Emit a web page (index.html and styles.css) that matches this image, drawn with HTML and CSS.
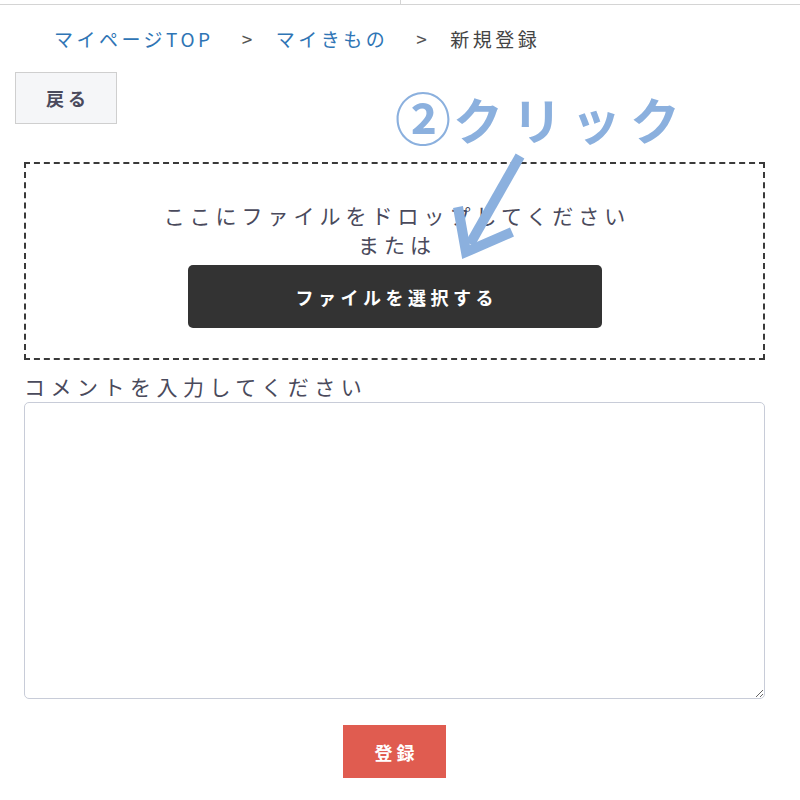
FILE: index.html
```html
<!DOCTYPE html>
<html lang="ja">
<head>
    <meta charset="UTF-8">
    <meta name="viewport" content="width=device-width, initial-scale=1.0">
    <title>新規登録</title>
    <link rel="stylesheet" href="styles.css">
</head>
<body>
    <div class="topbar">
        <div class="topbar-left"></div>
        <div class="topbar-right"></div>
    </div>

    <nav class="breadcrumb">
        <a href="#" class="crumb-link">マイページTOP</a>
        <span class="crumb-sep">&gt;</span>
        <a href="#" class="crumb-link">マイきもの</a>
        <span class="crumb-sep">&gt;</span>
        <span class="crumb-current">新規登録</span>
    </nav>

    <div class="back-row">
        <a href="#" class="back-button">戻る</a>
    </div>

    <form class="upload-form">
        <div class="dropzone">
            <p class="drop-text">ここにファイルをドロップしてください</p>
            <p class="drop-or">または</p>
            <button type="button" class="select-button">ファイルを選択する</button>
        </div>

        <label class="comment-label" for="comment">コメントを入力してください</label>
        <textarea id="comment" class="comment-box"></textarea>

        <div class="submit-row">
            <button type="submit" class="submit-button">登録</button>
        </div>
    </form>

    <!-- 説明用の注釈 -->
    <div class="note">
        <span class="note-text"><span class="note-num">②</span>クリック</span>
        <svg class="note-arrow" width="90" height="110" viewBox="0 0 90 110">
            <path d="M70 4 L20 92" stroke="#8bb0de" stroke-width="10" fill="none"/>
            <path d="M8 55 L16 100 L62 80" stroke="#8bb0de" stroke-width="10" fill="none"/>
        </svg>
    </div>
</body>
</html>
```

FILE: styles.css
```css
body {
    margin: 0;
    font-family: "Noto Sans CJK JP", "Noto Sans", sans-serif;
    color: #4a4a5c;
    background: #fff;
}
.topbar {
    display: flex;
    height: 4px;
    border-bottom: 1px solid #d4d4d4;
}
.topbar-left {
    width: 400px;
    border-right: 1px solid #d4d4d4;
}
.topbar-right {
    flex: 1;
}

.breadcrumb {
    display: flex;
    padding: 21px 0 0 54px;
    font-size: 19px;
    line-height: 26px;
    height: 26px;
    letter-spacing: 3.5px;
}
.crumb-link {
    color: #2f75b5;
    text-decoration: none;
}
.crumb-sep {
    color: #555;
    margin: 0 20px 0 28px;
}
.crumb-current {
    color: #444;
}

.back-row {
    padding: 20px 0 0 15px;
}
.back-button {
    display: inline-flex;
    align-items: center;
    justify-content: center;
    width: 100px;
    height: 50px;
    background-color: #f5f6f8;
    border: 1px solid #cfcfcf;
    color: #4a4a5c;
    font-size: 18px;
    font-weight: bold;
    letter-spacing: 4px;
    text-indent: 4px;
    text-decoration: none;
}

.upload-form {
    padding: 38px 35px 0 24px;
}
.dropzone {
    border: 2px dashed #3a3a3a;
    padding: 37px 0 30px;
    text-align: center;
}
.drop-text,
.drop-or {
    margin: 0;
    font-size: 21px;
    line-height: 29px;
    letter-spacing: 5px;
    text-indent: 5px;
}
.drop-or {
    margin-bottom: 6px;
}
.select-button {
    display: block;
    margin: 0 auto;
    width: 414px;
    height: 63px;
    background-color: #333;
    color: #fff;
    border: none;
    border-radius: 5px;
    font-family: inherit;
    font-size: 18px;
    font-weight: bold;
    letter-spacing: 4.5px;
    text-indent: 4.5px;
}

.comment-label {
    display: block;
    margin-top: 12px;
    font-size: 21px;
    line-height: 29px;
    letter-spacing: 5.5px;
}
.comment-box {
    display: block;
    box-sizing: border-box;
    width: 100%;
    height: 297px;
    margin-top: 1px;
    border: 1px solid #c8ccd8;
    border-radius: 5px;
}

.submit-row {
    text-align: center;
    padding-top: 26px;
}
.submit-button {
    width: 103px;
    height: 53px;
    background-color: #e05c50;
    color: #fff;
    border: none;
    font-family: inherit;
    font-size: 18px;
    font-weight: bold;
    letter-spacing: 4px;
    text-indent: 4px;
}

.note {
    position: absolute;
    left: 395px;
    top: 86px;
    width: 320px;
    pointer-events: none;
}
.note-text {
    display: block;
    color: #8bb0de;
    font-size: 50px;
    font-weight: bold;
    line-height: 60px;
    letter-spacing: 9px;
    white-space: nowrap;
}
.note-num {
    font-size: 56px;
    letter-spacing: 2px;
}
.note-arrow {
    position: absolute;
    left: 55px;
    top: 66px;
}
```
